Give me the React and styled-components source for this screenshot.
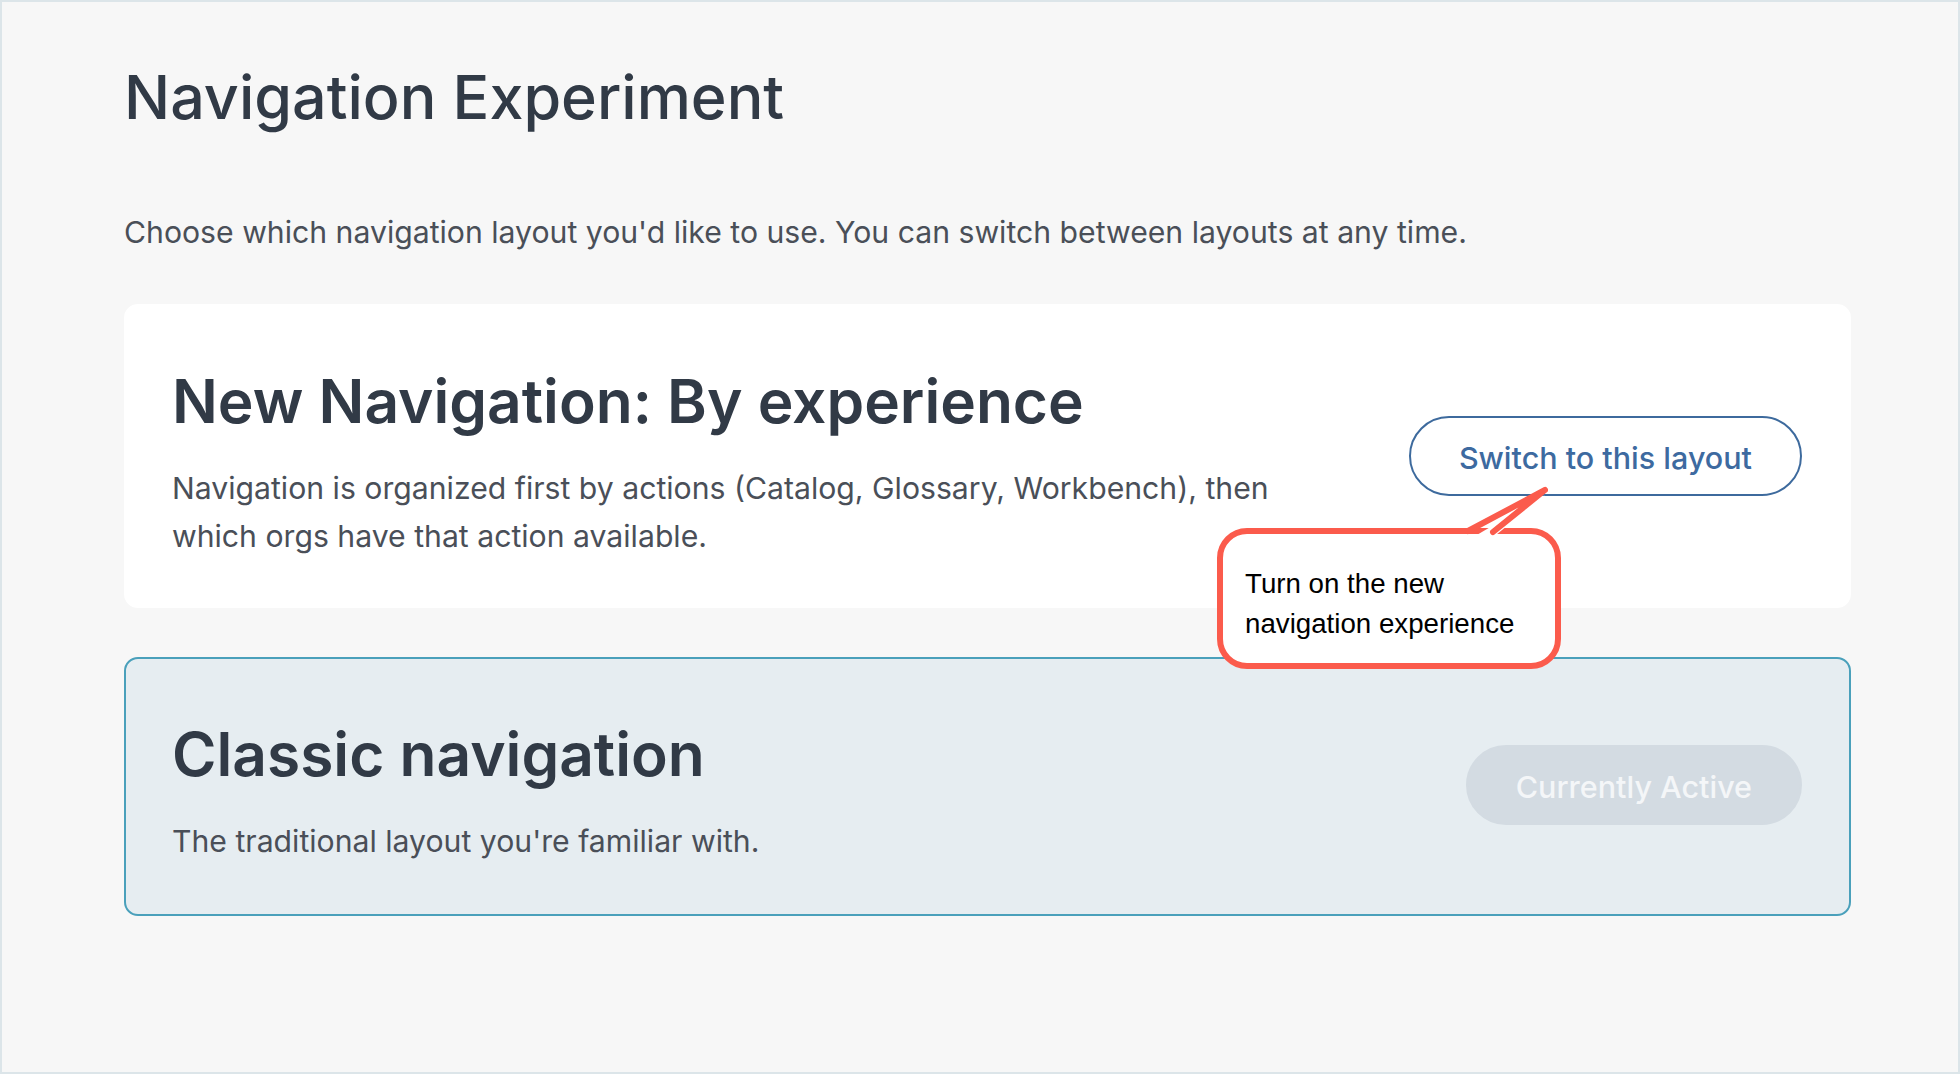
import React from "react";
import styled, { createGlobalStyle } from "styled-components";

const GlobalStyle = createGlobalStyle`
  html, body {
    margin: 0;
    padding: 0;
    background: #f7f7f7;
  }
  body {
    font-family: Inter, "Noto Sans", sans-serif;
    -webkit-font-smoothing: antialiased;
  }
  * { box-sizing: border-box; }
`;

const Frame = styled.div`
  height: 1074px;
  border: 2px solid #dce5e9;
  background: #f7f7f7;
  padding: 59px 0 0 122px;
  overflow: hidden;
`;

const Content = styled.main`
  width: 1727px;
  display: flex;
  flex-direction: column;
`;

const PageTitle = styled.h1`
  margin: 0;
  font-size: 61px;
  line-height: 72px;
  font-weight: 500;
  color: #313a46;
`;

const Intro = styled.p`
  margin: 79px 0 0;
  font-size: 30.2px;
  line-height: 40px;
  font-weight: 400;
  color: #4a4f58;
`;

const CardList = styled.div`
  margin-top: 52px;
  display: flex;
  flex-direction: column;
  gap: 49px;
`;

const Card = styled.section`
  position: relative;
  display: flex;
  align-items: center;
  justify-content: space-between;
  padding: 45px 47px ${(p) => (p.$active ? "49px" : "46px")} 46px;
  border-radius: 14px;
  border: 2px solid ${(p) => (p.$active ? "#4aa0bb" : "#ffffff")};
  background: ${(p) => (p.$active ? "#e6edf1" : "#ffffff")};
`;

const CardText = styled.div`
  max-width: 1130px;
`;

const CardTitle = styled.h2`
  margin: 14px 0 27px;
  font-size: 60.4px;
  line-height: 72px;
  font-weight: 600;
  color: #313a46;
`;

const CardDesc = styled.p`
  margin: 0;
  font-size: 30.2px;
  line-height: 48px;
  font-weight: 400;
  color: #4a4f58;
`;

const LayoutButton = styled.button`
  flex: none;
  height: 80px;
  padding: 3px 48px 0;
  border-radius: 40px;
  font-family: Inter, "Noto Sans", sans-serif;
  font-size: 30.5px;
  font-weight: 500;
  display: flex;
  align-items: center;
  justify-content: center;
  cursor: ${(p) => (p.disabled ? "default" : "pointer")};
  border: 2px solid ${(p) => (p.disabled ? "#d3dbe2" : "#3d6a9d")};
  background: ${(p) => (p.disabled ? "#d3dbe2" : "#ffffff")};
  color: ${(p) => (p.disabled ? "#f4f6f8" : "#3d6aa0")};
`;

const Callout = styled.div`
  position: absolute;
  left: 1091px;
  top: 222px;
  width: 344px;
  z-index: 2;
  padding: 30px 20px 19px 22px;
  background: #ffffff;
  border: 6px solid #fb5b4c;
  border-radius: 30px;
  font-family: "Liberation Sans", Arial, sans-serif;
  font-size: 27.7px;
  line-height: 40px;
  color: #000000;
`;

const CalloutTail = styled.svg`
  position: absolute;
  left: 245px;
  top: -50px;
  width: 90px;
  height: 60px;
  overflow: visible;
`;

function Tail() {
  return (
    <CalloutTail viewBox="0 0 90 60">
      <polygon points="2,55 77,11 23,55" fill="#ffffff" />
      <polyline
        points="0,47 77,6 25,48"
        fill="none"
        stroke="#fb5b4c"
        strokeWidth="6"
        strokeLinejoin="round"
        strokeLinecap="round"
      />
    </CalloutTail>
  );
}

export default function App() {
  return (
    <>
      <GlobalStyle />
      <Frame>
        <Content>
          <PageTitle>Navigation Experiment</PageTitle>
          <Intro>
            Choose which navigation layout you'd like to use. You can switch between layouts at any time.
          </Intro>
          <CardList>
            <Card>
              <CardText>
                <CardTitle>New Navigation: By experience</CardTitle>
                <CardDesc>
                  Navigation is organized first by actions (Catalog, Glossary, Workbench), then which orgs have
                  that action available.
                </CardDesc>
              </CardText>
              <LayoutButton>Switch to this layout</LayoutButton>
              <Callout>
                <Tail />
                Turn on the new
                <br />
                navigation experience
              </Callout>
            </Card>
            <Card $active>
              <CardText>
                <CardTitle>Classic navigation</CardTitle>
                <CardDesc>The traditional layout you're familiar with.</CardDesc>
              </CardText>
              <LayoutButton disabled>Currently Active</LayoutButton>
            </Card>
          </CardList>
        </Content>
      </Frame>
    </>
  );
}
